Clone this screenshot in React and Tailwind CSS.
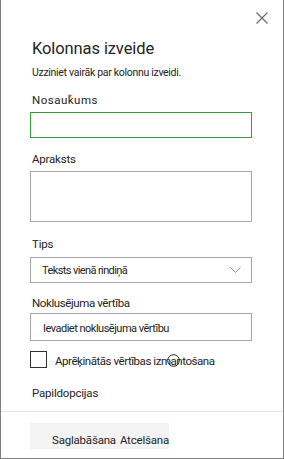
import React from "react";

const font = { fontFamily: "Roboto, 'Liberation Sans', sans-serif" };

// Etiķete laukam
const FieldLabel = ({ children, className = "" }) => (
  <div className={`text-[11.5px] leading-[16px] tracking-[-0.2px] text-[#252423] ${className}`}>
    {children}
  </div>
);

const App = () => {
  return (
    <div
      style={font}
      className="relative w-[284px] h-[459px] bg-white border-l border-r border-b border-[#7f7f7f] flex flex-col overflow-hidden"
    >
      {/* Aizvērt */}
      <button className="absolute top-[12px] right-[15px] w-[12px] h-[12px] text-[#666]">
        <svg width="12" height="12" viewBox="0 0 12 12" fill="none" stroke="currentColor" strokeWidth="1.1">
          <path d="M0.5 0.5 L11.5 11.5 M11.5 0.5 L0.5 11.5" />
        </svg>
      </button>

      <div className="flex flex-col px-[29px] pt-[39px]">
        <h2 className="text-[16.5px] leading-[20px] pl-[2px] text-[#252423] tracking-[-0.1px]">Kolonnas izveide</h2>
        <p className="mt-[6px] text-[10.5px] leading-[16px] pl-[2px] tracking-[-0.3px] text-[#252423]">
          Uzziniet vairāk par kolonnu izveidi.
        </p>

        <FieldLabel className="mt-[11px] pl-[2px]">
          <span className="relative tracking-[0.5px]">
            Nosaukums
            <span className="absolute left-[36px] top-[1px] text-[9px] leading-none text-[#c4314b]">*</span>
          </span>
        </FieldLabel>
        <input
          className="mt-[4px] h-[26px] w-[222px] border border-[#3a9a3a] outline-none px-[12px] text-[12px]"
          type="text"
        />

        <FieldLabel className="mt-[13px] pl-[2px]">Apraksts</FieldLabel>
        <textarea className="mt-[4px] h-[51px] w-[222px] border border-[#a6a6a6] outline-none resize-none" />

        <FieldLabel className="mt-[14px] pl-[2px]">Tips</FieldLabel>
        <div className="mt-[5px] h-[26px] w-[222px] border border-[#a6a6a6] flex items-center justify-between pl-[11px] pr-[10px]">
          <span className="text-[11px] leading-[16px] tracking-[-0.6px] text-[#252423] pt-[1px]">Teksts vienā rindiņā</span>
          <svg width="11" height="6" viewBox="0 0 11 6" fill="none" stroke="#8a8886" strokeWidth="1">
            <path d="M0.5 0.5 L5.5 5.3 L10.5 0.5" />
          </svg>
        </div>

        <FieldLabel className="mt-[12px] pl-[2px] tracking-[-0.4px]">Noklusējuma vērtība</FieldLabel>
        <input
          className="mt-[2px] h-[28px] w-[222px] border border-[#a6a6a6] outline-none px-[12px] pt-[2px] text-[11px] tracking-[-0.5px] text-[#252423] placeholder:text-[#252423]"
          style={font}
          type="text"
          placeholder="Ievadiet noklusējuma vērtību"
        />

        <label className="mt-[10px] flex items-start gap-[8px]">
          <span className="w-[17px] h-[17px] border border-[#323130] bg-white shrink-0" />
          <span className="relative mt-[2px] text-[11.5px] leading-[16px] tracking-[-0.45px] text-[#252423]">
            Aprēķinātās vērtības izmantošana
            <svg
              className="absolute left-[112px] top-[1px]"
              width="13"
              height="13"
              viewBox="0 0 13 13"
              fill="none"
              stroke="#252423"
              strokeWidth="1"
            >
              <circle cx="6.5" cy="6.5" r="5.8" />
            </svg>
          </span>
        </label>

        <FieldLabel className="mt-[16px] pl-[2px]">Papildopcijas</FieldLabel>
      </div>

      <div className="mt-[10px] h-px bg-[#e6e6e6]" />

      <div className="px-[29px] pt-[11px]">
        <div className="h-[26px] w-[139px] bg-[#f3f3f3] pl-[22px] pt-[7px] text-[11.5px] leading-[16px] tracking-[-0.2px] text-[#252423] flex gap-[4px]">
          <button>Saglabāšana</button>
          <button>Atcelšana</button>
        </div>
      </div>
    </div>
  );
};

export default App;
